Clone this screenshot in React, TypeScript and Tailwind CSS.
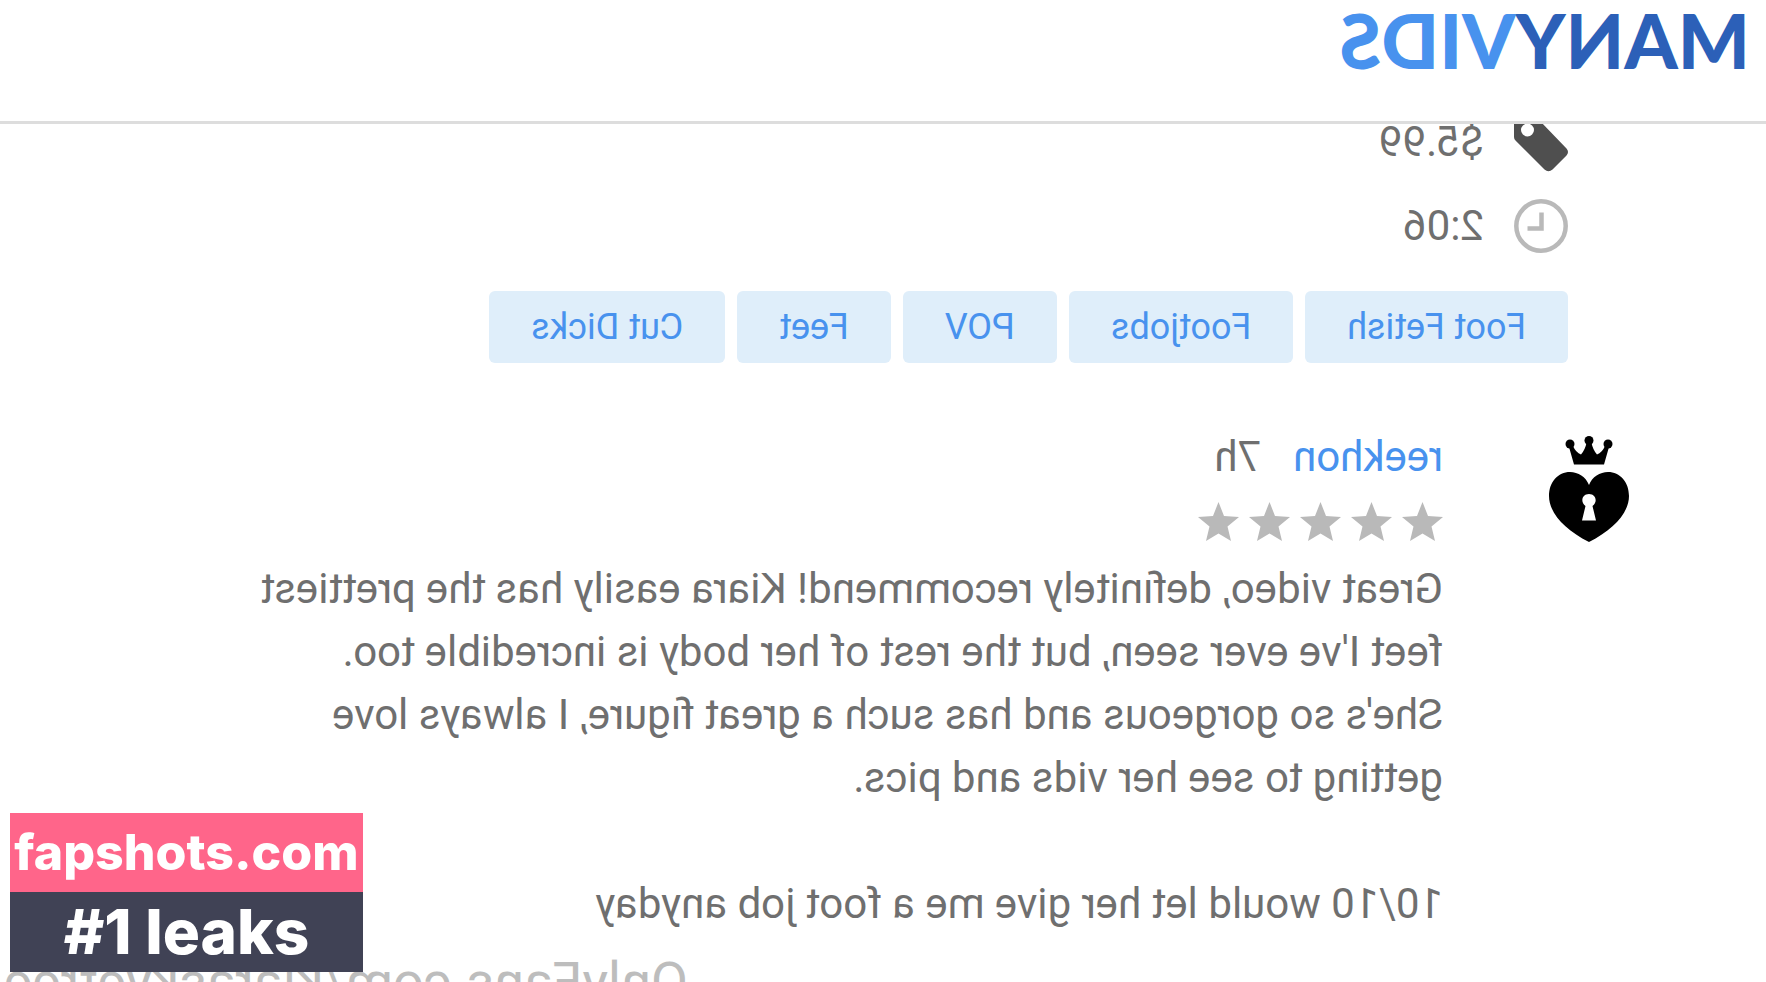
import { Fragment } from "react";

const tags = ["Foot Fetish", "Footjobs", "POV", "Feet", "Cut Dicks"];

const review = {
  user: "reekhon",
  age: "7h",
  stars: 5,
  lines: [
    "Great video, definitely recommend! Kiara easily has the prettiest",
    "feet I've ever seen, but the rest of her body is incredible too.",
    "She's so gorgeous and has such a great figure, I always love",
    "getting to see her vids and pics.",
  ],
  closing: "10/10 would let her give me a foot job anyday",
};

function TagIcon() {
  return (
    <svg
      viewBox="0 0 54 54"
      className="h-[54px] w-[54px] shrink-0 overflow-visible fill-[#4f4f4f]"
      aria-hidden="true"
    >
      <path
        fillRule="evenodd"
        d="M24 1 H48 Q54 1 54 7 V22 Q54 24 52.500 25.500 L23.500 54.500 Q19.500 58 15.500 54.500 L1.500 40.500 Q-1.500 37 1.500 33.500 L28 6 Z M40.500 8.500 A6.500 6.500 0 1 0 40.500 21.500 A6.500 6.500 0 1 0 40.500 8.500 Z"
      />
    </svg>
  );
}

function ClockIcon() {
  return (
    <svg
      viewBox="0 0 54 54"
      className="h-[54px] w-[54px] shrink-0 fill-none stroke-[#b9b9b9]"
      strokeWidth="4.500"
      aria-hidden="true"
    >
      <circle cx="27" cy="27" r="24.700" />
      <path d="M26.500 13.500 V29.500 H40.500" />
    </svg>
  );
}

function Star() {
  return (
    <svg
      viewBox="0 0 41 39"
      className="h-[39px] w-[41px] fill-[#b9b9b9]"
      aria-hidden="true"
    >
      <path d="M20.500 0 L26 14 L41 15 L29.500 24.500 L33 39 L20.500 31.500 L8 39 L11.500 24.500 L0 15 L15 14 Z" />
    </svg>
  );
}

function Avatar() {
  return (
    <svg
      viewBox="0 0 80 106"
      className="h-[106px] w-[80px] shrink-0 fill-black"
      role="img"
      aria-label={review.user}
    >
      <circle cx="21" cy="8" r="4.500" />
      <circle cx="40" cy="4.500" r="4.500" />
      <circle cx="59" cy="8" r="4.500" />
      <path d="M25 28.500 L20 11 L23.500 9 Q27 17 32 18.500 Q36 14 37.500 7 H42.500 Q44 14 48 18.500 Q53 17 56.500 9 L60 11 L55 28.500 Z" />
      <path
        fillRule="evenodd"
        d="M40 49 C37 41 29 36 21 36 C9 36 0 46 0 60 C0 77 16 94 40 106 C64 94 80 77 80 60 C80 46 71 36 59 36 C51 36 43 41 40 49 Z M36.500 70 C31 66 33 58 40 58 C47 58 49 66 43.500 70 L47 84.500 H33 Z"
      />
    </svg>
  );
}

function Header() {
  return (
    <header className="absolute inset-x-0 top-0 z-10 h-[124px] border-b-[3px] border-[#dddddd] bg-white px-4">
      <a
        href="#"
        className="block font-['Lato'] text-[76px] leading-[80px] font-black text-[#2c60b8]"
      >
        MANY<span className="text-[#4892ee]">VIDS</span>
      </a>
    </header>
  );
}

function VideoInfo() {
  return (
    <section className="px-[198px]">
      <div className="flex flex-col gap-[30px] text-[42px] leading-[54px]">
        <div className="flex items-center gap-[30px]">
          <TagIcon />
          <span>$5.99</span>
        </div>
        <div className="flex items-center gap-[30px]">
          <ClockIcon />
          <span>2:06</span>
        </div>
      </div>

      <div className="mt-[38px] flex gap-3">
        {tags.map((tag) => (
          <a
            key={tag}
            href="#"
            className="rounded-md bg-[#dfeefa] px-[42px] text-[36px] leading-[72px] whitespace-nowrap text-[#4892ee]"
          >
            {tag}
          </a>
        ))}
      </div>
    </section>
  );
}

function Review() {
  return (
    <article className="mt-[62px] flex items-start pl-[137px]">
      <div className="mt-[11px]">
        <Avatar />
      </div>
      <div className="ml-[106px] text-[42px] leading-[63px] whitespace-nowrap">
        <div className="flex gap-8">
          <a href="#" className="text-[#4892ee]">
            {review.user}
          </a>
          <span>{review.age}</span>
        </div>
        <div className="mt-[14px] mb-[16px] flex gap-[10px]">
          {Array.from({ length: review.stars }, (_, i) => (
            <Star key={i} />
          ))}
        </div>
        <p>
          {review.lines.map((line) => (
            <Fragment key={line}>
              {line}
              <br />
            </Fragment>
          ))}
        </p>
        <p className="mt-[63px]">{review.closing}</p>
      </div>
    </article>
  );
}

function SiteBadge() {
  return (
    <div className="absolute bottom-[10px] left-[10px] w-[353px] text-center font-['Inter'] font-extrabold whitespace-nowrap text-white">
      <div className="bg-[#ff658a] text-[50px] leading-[79px]">
        fapshots.com
      </div>
      <div className="bg-[#404255] text-[62px] leading-[80px]">#1 leaks</div>
    </div>
  );
}

export default function App() {
  return (
    <div className="relative h-screen overflow-hidden bg-white font-['Roboto',sans-serif] text-[#6f6f6f]">
      {/* The whole page is flipped, only the badge reads normally */}
      <div className="relative h-full -scale-x-100 overflow-hidden">
        <Header />
        <main className="pt-[115px]">
          <VideoInfo />
          <Review />
        </main>
        <div className="absolute top-full right-1 -mt-[30px] text-[54px] leading-[60px] text-[#bdbdbd]">
          OnlyFans.com/kiaraskyefree
        </div>
      </div>
      <SiteBadge />
    </div>
  );
}
